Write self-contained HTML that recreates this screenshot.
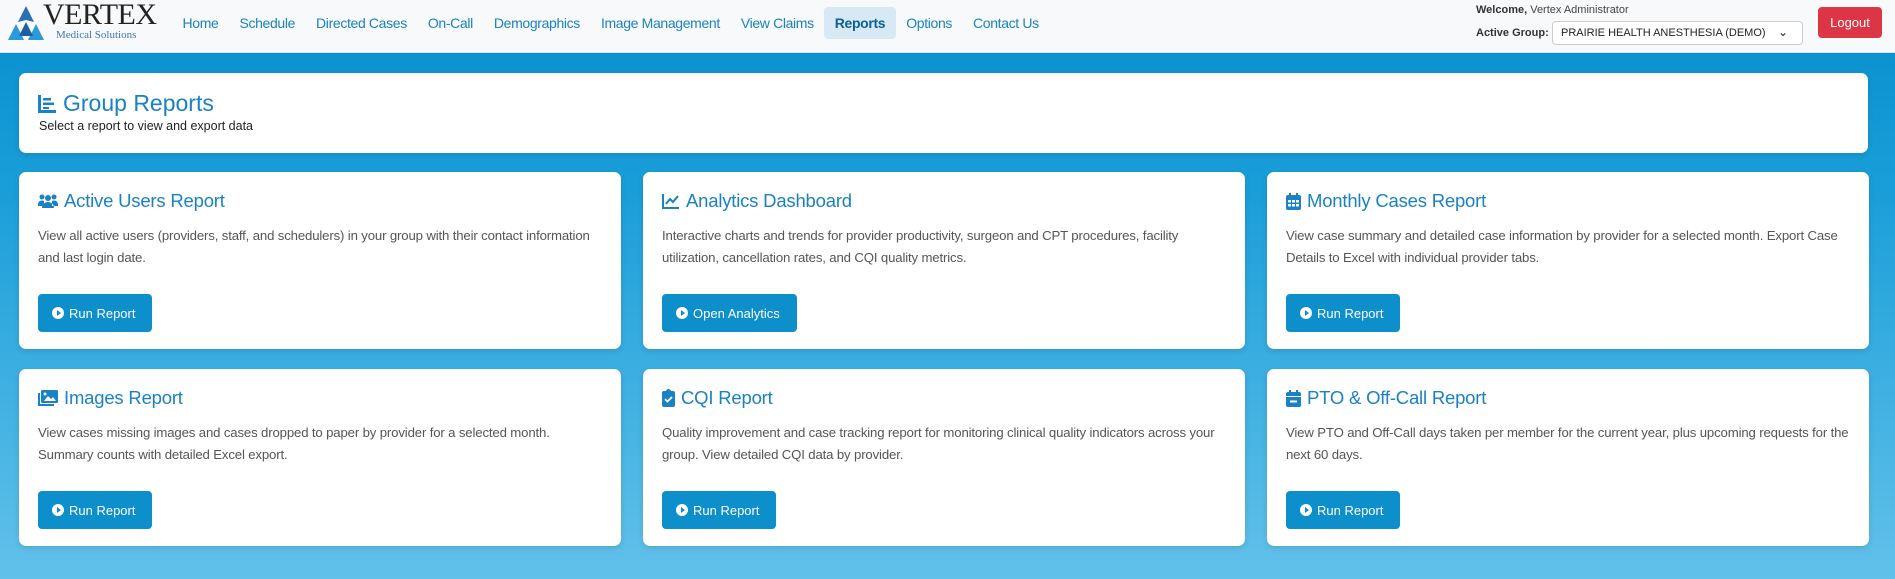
<!DOCTYPE html>
<html><head><style>
*{box-sizing:border-box;margin:0;padding:0}
body{width:1895px;height:579px;overflow:hidden;font-family:"Liberation Sans",sans-serif;background:linear-gradient(#0b93d0 53px,#1c9fd9 200px,#62c1ea 579px);position:relative}
.nav{position:absolute;left:0;top:0;width:1895px;height:53px;background:#f8f9fa;border-bottom:1px solid #ddd}
.logo{position:absolute;left:6px;top:3px;width:150px;height:40px}
.links{position:absolute;left:172px;top:7px;display:flex}
.links a{color:#1a82c4;font-size:14px;padding:8px 10.5px;border-radius:4px;text-decoration:none;height:32px;line-height:16px;letter-spacing:-.35px}
.links a.act{background:#d6e9f5;color:#0d5f95;font-weight:bold}
.wel{position:absolute;left:1476px;top:4px;font-size:11px;color:#444}
.ag{position:absolute;left:1476px;top:27px;font-size:11px;color:#333;font-weight:bold}
.sel{position:absolute;left:1552px;top:21px;width:251px;height:24px;border:1px solid #ccc;border-radius:4px;background:#fff;font-size:11px;padding:5px 8px;color:#222}
.sel span{position:absolute;right:14px;top:3px;font-size:12px}
.lo{position:absolute;left:1818px;top:7px;width:64px;height:31px;background:#dc3545;color:#fff;border-radius:4px;font-size:13px;text-align:center;line-height:31px}
.card{position:absolute;background:#fff;border-radius:7px;box-shadow:0 2px 6px rgba(0,0,0,.12)}
.hdr{left:19px;top:73px;width:1849px;height:80px}
.hdr h1{position:absolute;left:18px;top:17px;font-size:23px;color:#1a82c4;font-weight:normal;display:flex;align-items:center;gap:6px}
.hdr p{position:absolute;left:20px;top:46px;font-size:12.5px;color:#222}
.rc{width:602px;height:177px}
.rc h2{position:absolute;left:19px;top:18px;font-size:18.5px;color:#1a82c4;font-weight:normal;display:flex;align-items:center;gap:6px;letter-spacing:-.2px}
.rc p{position:absolute;left:19px;top:53px;white-space:nowrap;font-size:13.2px;line-height:21.5px;color:#555;letter-spacing:-.15px}
.btn{position:absolute;left:19px;top:122px;height:38px;background:#0d8fcc;color:#fff;border-radius:4px;font-size:13px;display:flex;align-items:center;padding:0 17px 0 14px;gap:5px}
.btn i{display:inline-block;width:12px;height:12px;border-radius:50%;background:#fff;position:relative}
.btn i:after{content:"";position:absolute;left:4.5px;top:3px;border-left:4px solid #0d8fcc;border-top:3px solid transparent;border-bottom:3px solid transparent}
svg{display:block}
</style></head><body>
<div class="nav">
 <div class="logo">
  <svg width="40" height="36" viewBox="0 0 40 36" style="position:absolute;left:0;top:3px"><polygon points="20,0 28,16 20,14 12,16" fill="#2a6fb0"/><polygon points="10,18 18,34 2,34" fill="#2a9ad8"/><polygon points="30,18 38,34 22,34" fill="#2a9ad8"/><polygon points="20,16 27,30 13,30" fill="#1e5fa0"/></svg>
  <div style="position:absolute;left:37px;top:-5px;font-family:'Liberation Serif',serif;font-size:30px;color:#222;letter-spacing:-.5px">VERTEX</div>
  <div style="position:absolute;left:50px;top:26px;font-family:'Liberation Serif',serif;font-size:11px;color:#3a78b8">Medical Solutions</div>
 </div>
 <div class="links"><a>Home</a><a>Schedule</a><a>Directed Cases</a><a>On-Call</a><a>Demographics</a><a>Image Management</a><a>View Claims</a><a class="act">Reports</a><a>Options</a><a>Contact Us</a></div>
 <div class="wel"><b style="color:#333">Welcome,</b> Vertex Administrator</div>
 <div class="ag">Active Group:</div>
 <div class="sel">PRAIRIE HEALTH ANESTHESIA (DEMO)<span>&#8964;</span></div>
 <div class="lo">Logout</div>
</div>
<div class="card hdr"><h1><svg width="20" height="20" viewBox="0 0 20 20" fill="#1a82c4"><rect x="1" y="1" width="3" height="18"/><rect x="1" y="16" width="18" height="3"/><rect x="6" y="4" width="8" height="2.5"/><rect x="6" y="8.5" width="11" height="2.5"/><rect x="6" y="13" width="6" height="2"/></svg>Group Reports</h1><p>Select a report to view and export data</p></div>

<div class="card rc" style="left:19px;top:172px"><h2><svg width="20" height="16" viewBox="0 0 20 16" fill="#1a82c4"><circle cx="4" cy="4" r="2.5"/><circle cx="16" cy="4" r="2.5"/><circle cx="10" cy="5" r="3"/><path d="M0 11a4 4 0 0 1 6-3v5H0z M20 11a4 4 0 0 0-6-3v5h6z M4 15a6 6 0 0 1 12 0z"/></svg>Active Users Report</h2><p>View all active users (providers, staff, and schedulers) in your group with their contact information<br>and last login date.</p><div class="btn"><i></i>Run Report</div></div>
<div class="card rc" style="left:643px;top:172px"><h2><svg width="18" height="16" viewBox="0 0 18 16" fill="none" stroke="#1a82c4" stroke-width="2"><path d="M1 1v14h16"/><path d="M4 11l4-5 3 3 5-6"/></svg>Analytics Dashboard</h2><p>Interactive charts and trends for provider productivity, surgeon and CPT procedures, facility<br>utilization, cancellation rates, and CQI quality metrics.</p><div class="btn"><i></i>Open Analytics</div></div>
<div class="card rc" style="left:1267px;top:172px"><h2><svg width="15" height="17" viewBox="0 0 15 17" fill="#1a82c4"><rect x="3" y="0" width="2" height="4"/><rect x="10" y="0" width="2" height="4"/><rect x="0" y="2" width="15" height="15" rx="2"/><g fill="#fff"><rect x="2" y="7" width="3" height="2.5"/><rect x="6" y="7" width="3" height="2.5"/><rect x="10" y="7" width="3" height="2.5"/><rect x="2" y="11" width="3" height="2.5"/><rect x="6" y="11" width="3" height="2.5"/><rect x="10" y="11" width="3" height="2.5"/></g></svg>Monthly Cases Report</h2><p>View case summary and detailed case information by provider for a selected month. Export Case<br>Details to Excel with individual provider tabs.</p><div class="btn"><i></i>Run Report</div></div>

<div class="card rc" style="left:19px;top:369px"><h2><svg width="20" height="16" viewBox="0 0 20 16" fill="#1a82c4"><rect x="3" y="0" width="17" height="13" rx="1.5"/><path d="M0 3v13h16v-2H2V3z"/><path d="M6 11l4-5 3 3 2-2 3 4z" fill="#fff"/><circle cx="7" cy="4" r="1.5" fill="#fff"/></svg>Images Report</h2><p>View cases missing images and cases dropped to paper by provider for a selected month.<br>Summary counts with detailed Excel export.</p><div class="btn"><i></i>Run Report</div></div>
<div class="card rc" style="left:643px;top:369px"><h2><svg width="13" height="18" viewBox="0 0 13 18" fill="#1a82c4"><rect x="0" y="2" width="13" height="16" rx="2"/><circle cx="6.5" cy="2.5" r="2.5"/><path d="M3 10l2.5 2.5L10 8" stroke="#fff" stroke-width="1.8" fill="none"/></svg>CQI Report</h2><p>Quality improvement and case tracking report for monitoring clinical quality indicators across your<br>group. View detailed CQI data by provider.</p><div class="btn"><i></i>Run Report</div></div>
<div class="card rc" style="left:1267px;top:369px"><h2><svg width="15" height="17" viewBox="0 0 15 17" fill="#1a82c4"><rect x="3" y="0" width="2" height="4"/><rect x="10" y="0" width="2" height="4"/><rect x="0" y="2" width="15" height="15" rx="2"/><rect x="0" y="6" width="15" height="1" fill="#fff"/><rect x="4" y="10.5" width="7" height="2" fill="#fff"/></svg>PTO &amp; Off-Call Report</h2><p>View PTO and Off-Call days taken per member for the current year, plus upcoming requests for the<br>next 60 days.</p><div class="btn"><i></i>Run Report</div></div>
</body></html>
